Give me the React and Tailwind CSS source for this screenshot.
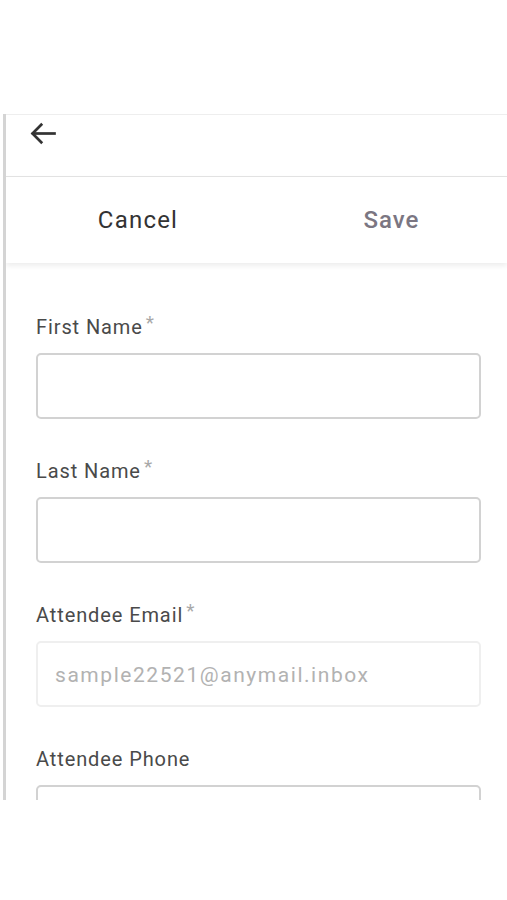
import React from "react";

function Field({ label, required, value, disabled }) {
  return (
    <div className="mb-[40px]">
      <div className="h-[24px] leading-[24px] text-[20px] tracking-[0.9px] text-[#4a4a4a]">
        {label}
        {required && <span className="text-[#a8a8a8] relative -top-[5px] ml-[3px] text-[19px]">*</span>}
      </div>
      <div
        className={
          "mt-[14px] h-[66px] rounded-[5px] border-2 flex items-center px-[17px] " +
          (disabled ? "border-[#efefef]" : "border-[#d2d2d2]")
        }
      >
        {value && <span className="text-[21px] tracking-[1.55px] text-[#b2b2b2] relative top-[2px]">{value}</span>}
      </div>
    </div>
  );
}

export default function App() {
  return (
    <div className="w-[507px] h-[900px] bg-white overflow-hidden" style={{ fontFamily: "Roboto, 'Noto Sans', sans-serif" }}>
      <div className="h-[114px]" />
      <div className="ml-[3px] h-[686px] border-l-[3px] border-[#d4d4d4] overflow-hidden">
        <div className="border-t border-[#eeeeee] h-[62px] pl-[22px] pt-[3px]">
          <svg width="31" height="31" viewBox="0 0 24 24" fill="none" stroke="#333" strokeWidth="2.1" strokeLinecap="square">
            <path d="M20.5 12H4" />
            <path d="M11 4.5L3.5 12L11 19.5" strokeLinecap="butt" />
          </svg>
        </div>
        <div className="border-t border-[#e2e2e2] h-[87px] flex items-center shadow-[0_3px_5px_rgba(0,0,0,0.07)] relative">
          <div className="w-[258px] text-center text-[24px] tracking-[1.2px] text-[#333] pl-[6px]">Cancel</div>
          <div className="flex-1 text-center text-[24px] tracking-[1px] text-[#7b7682] font-medium pl-[12px]">Save</div>
        </div>
        <div className="pt-[52px] pl-[30px] w-[475px]">
          <Field label="First Name" required />
          <Field label="Last Name" required />
          <Field label="Attendee Email" required value="sample22521@anymail.inbox" disabled />
          <Field label="Attendee Phone" />
        </div>
      </div>
    </div>
  );
}
